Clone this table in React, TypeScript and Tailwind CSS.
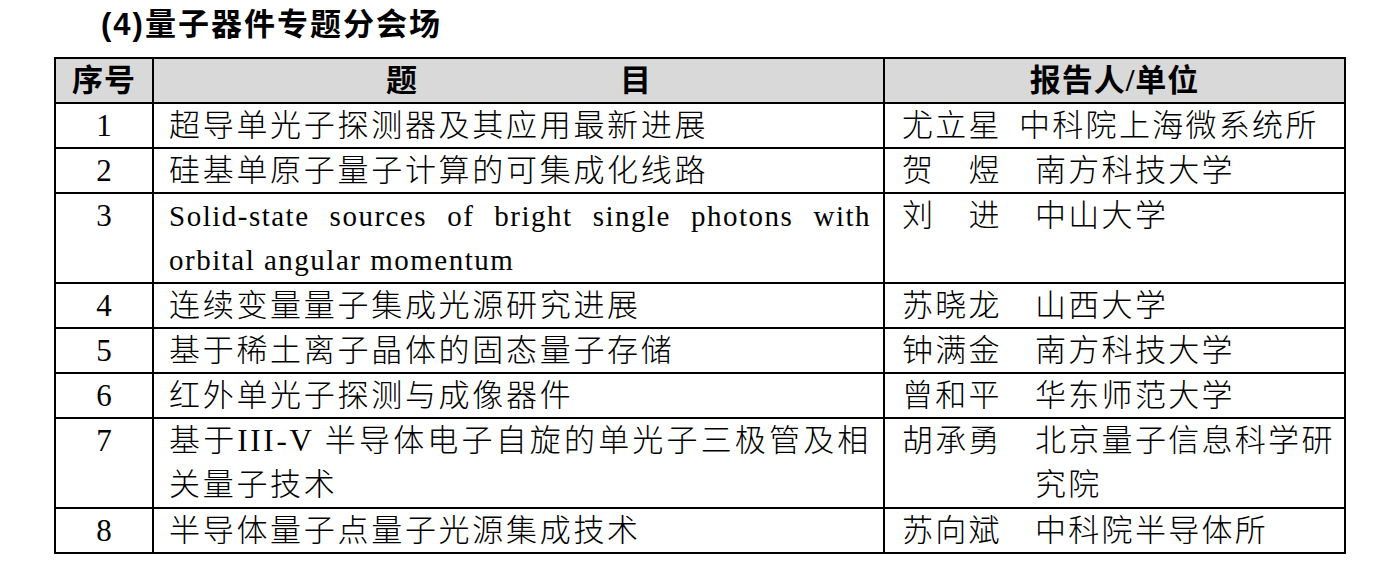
type Row = {
  no: string;
  title: string[];
  en?: boolean;
  name: string;
  unit: string;
  nameW?: string;
};

const rows: Row[] = [
  { no: "1", title: ["超导单光子探测器及其应用最新进展"], name: "尤立星", unit: "中科院上海微系统所", nameW: "w-[117px]" },
  { no: "2", title: ["硅基单原子量子计算的可集成化线路"], name: "贺　煜", unit: "南方科技大学" },
  {
    no: "3",
    title: ["Solid-state sources of bright single photons with", "orbital angular momentum"],
    en: true,
    name: "刘　进",
    unit: "中山大学",
  },
  { no: "4", title: ["连续变量量子集成光源研究进展"], name: "苏晓龙", unit: "山西大学" },
  { no: "5", title: ["基于稀土离子晶体的固态量子存储"], name: "钟满金", unit: "南方科技大学" },
  { no: "6", title: ["红外单光子探测与成像器件"], name: "曾和平", unit: "华东师范大学" },
  {
    no: "7",
    title: ["基于III-V 半导体电子自旋的单光子三极管及相", "关量子技术"],
    name: "胡承勇",
    unit: "北京量子信息科学研究院",
  },
  { no: "8", title: ["半导体量子点量子光源集成技术"], name: "苏向斌", unit: "中科院半导体所" },
];

const App = () => {
  return (
    <div className="w-[1396px] min-h-[576px] bg-white text-black font-['Liberation_Serif','Noto_Sans_CJK_SC',serif]">
      {/* 标题 */}
      <div className="h-[57px] pl-[101px]">
        <div className="leading-[50px] text-[31px] font-bold tracking-[2px] font-['Liberation_Sans','Noto_Sans_CJK_SC',sans-serif]">
          (4)量子器件专题分会场
        </div>
      </div>

      {/* 表格 */}
      <div className="ml-[54px] w-[1292px] border-2 border-black">
        <div className="grid grid-cols-[96px_731px_461px] bg-[#d9d9d9] h-[43px] text-[31px] font-bold leading-[43px]">
          <div className="text-center tracking-[1px]">序号</div>
          <div className="border-l-2 border-black flex justify-center gap-[203px]">
            <span>题</span>
            <span>目</span>
          </div>
          <div className="border-l-2 border-black text-center tracking-[1px]">报告人/单位</div>
        </div>

        {rows.map((r) => {
          const lines = r.title.length;
          return (
            <div
              key={r.no}
              className="grid grid-cols-[96px_731px_461px] border-t-2 border-black font-light"
            >
              <div className="text-center text-[31px] leading-[43px] font-normal font-['Liberation_Serif',serif]">
                {r.no}
              </div>

              <div className="border-l-2 border-black pl-[15px] pr-[12px]">
                {r.title.map((t, i) => (
                  <div
                    key={i}
                    className={
                      (lines > 1 ? "h-[44px] leading-[44px] " : "h-[43px] leading-[43px] ") +
                      (r.en
                        ? "text-[29px] tracking-[1.5px] font-normal font-['Liberation_Serif',serif] "
                        : "text-[31px] tracking-[2.7px] ") +
                      "whitespace-nowrap " +
                      (lines > 1 && i === 0 ? "text-justify [text-align-last:justify]" : "")
                    }
                  >
                    {t}
                  </div>
                ))}
              </div>

              <div className="border-l-2 border-black pl-[17px] pr-[6px] flex text-[31px] tracking-[2.3px] leading-[43px]">
                <span className={"shrink-0 " + (r.nameW ?? "w-[133px]")}>{r.name}</span>
                <span className={"flex-1 " + (lines > 1 ? "leading-[44px]" : "")}>{r.unit}</span>
              </div>
            </div>
          );
        })}
      </div>
    </div>
  );
};

export default App;
